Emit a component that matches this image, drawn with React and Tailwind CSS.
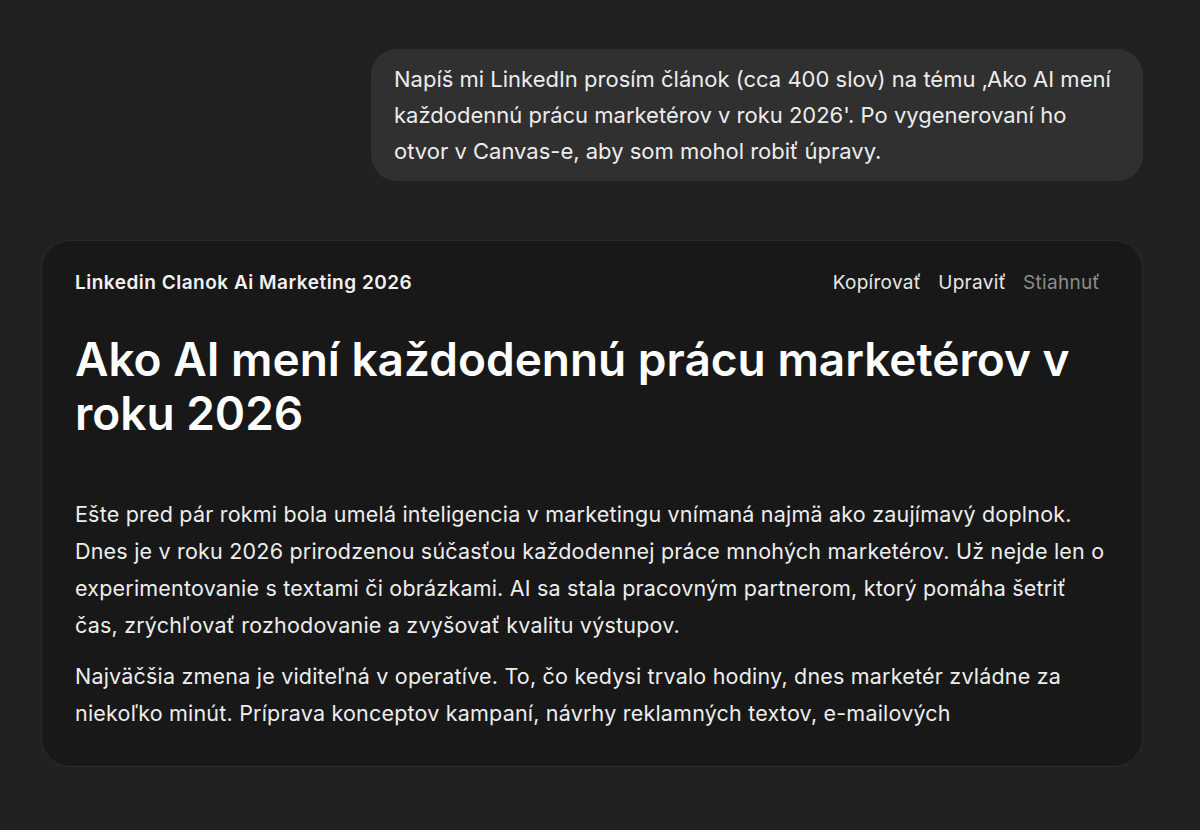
const bubbleLines = [
  "Napíš mi LinkedIn prosím článok (cca 400 slov) na tému ‚Ako AI mení",
  "každodennú prácu marketérov v roku 2026'. Po vygenerovaní ho",
  "otvor v Canvas-e, aby som mohol robiť úpravy.",
];

const p1 = [
  "Ešte pred pár rokmi bola umelá inteligencia v marketingu vnímaná najmä ako zaujímavý doplnok.",
  "Dnes je v roku 2026 prirodzenou súčasťou každodennej práce mnohých marketérov. Už nejde len o",
  "experimentovanie s textami či obrázkami. AI sa stala pracovným partnerom, ktorý pomáha šetriť",
  "čas, zrýchľovať rozhodovanie a zvyšovať kvalitu výstupov.",
];

const p2 = [
  "Najväčšia zmena je viditeľná v operatíve. To, čo kedysi trvalo hodiny, dnes marketér zvládne za",
  "niekoľko minút. Príprava konceptov kampaní, návrhy reklamných textov, e-mailových",
];

export default function App() {
  return (
    <div className="min-h-[830px] w-full bg-[#212121] text-white" style={{ fontFamily: "Inter, 'Noto Sans', sans-serif" }}>
      <div className="flex flex-col pt-[49px] pl-[41px] pr-[57px]">
        <div className="flex justify-end">
          <div className="w-[772px] rounded-[26px] bg-[#303030] pl-[23px] pr-[20px] py-[12px] text-[22px] leading-[36px] text-[#ececec]">
            {bubbleLines.map((l, i) => (
              <span key={i} className="block whitespace-nowrap">{l}</span>
            ))}
          </div>
        </div>
        <div className="mt-[59px] h-[527px] rounded-[29px] border border-[#2b2b2b] bg-[#181818] pl-[33px] pr-[34px] pt-[30px]">
          <div className="flex items-center justify-between">
            <div className="text-[19px] font-semibold leading-[24px] tracking-[0.5px] text-[#f2f2f2]">Linkedin Clanok Ai Marketing 2026</div>
            <div className="flex gap-[17px] pr-[8px] text-[19px] leading-[24px] tracking-[0.3px]">
              <span className="text-[#e8e8e8]">Kopírovať</span>
              <span className="text-[#e8e8e8]">Upraviť</span>
              <span className="text-[#8c8c8c]">Stiahnuť</span>
            </div>
          </div>
          <h1 className="mt-[37px] text-[46px] font-semibold leading-[54px] text-white">
            <span className="block whitespace-nowrap">Ako AI mení každodennú prácu marketérov v</span>
            <span className="block whitespace-nowrap">roku 2026</span>
          </h1>
          <div className="mt-[56px] text-[21.5px] leading-[37px] tracking-[0.2px] text-[#ededed]">
            <p>
              {p1.map((l, i) => (
                <span key={i} className="block whitespace-nowrap">{l}</span>
              ))}
            </p>
            <p className="mt-[14px]">
              {p2.map((l, i) => (
                <span key={i} className="block whitespace-nowrap">{l}</span>
              ))}
            </p>
          </div>
        </div>
      </div>
    </div>
  );
}
